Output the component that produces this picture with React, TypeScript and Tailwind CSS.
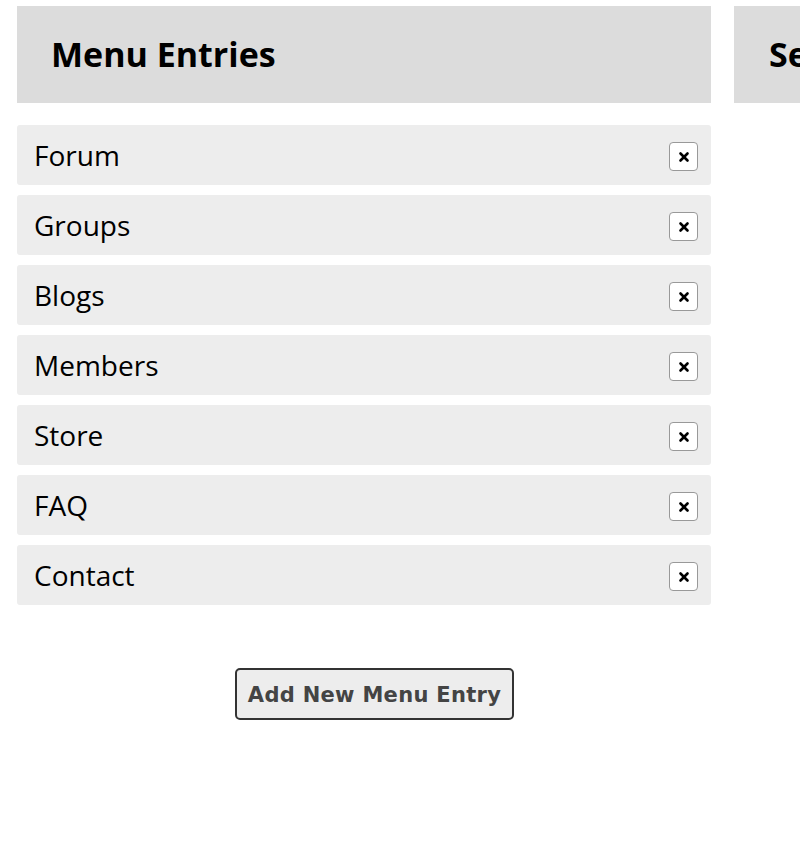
import { X } from "lucide-react";

const entries = ["Forum", "Groups", "Blogs", "Members", "Store", "FAQ", "Contact"];

function EntryRow({ label }: { label: string }) {
    return (
        <div className="flex items-center justify-between h-[60px] rounded-[3px] bg-[#ededed] pl-[17px] pr-[13px]">
            <span className="text-[28px] text-black leading-none">{label}</span>
            <button className="w-[29px] h-[29px] mt-[3px] flex items-center justify-center rounded-[4px] border border-[#999] bg-white">
                <X className="w-[14px] h-[14px] text-black" strokeWidth={4.5} />
            </button>
        </div>
    );
}

export default function App() {
    return (
        <div className="w-[800px] h-[845px] overflow-hidden bg-white pt-[6px] pl-[17px]" style={{ fontFamily: '"Open Sans", sans-serif' }}>
            <div className="flex gap-[23px] w-[1500px]">
                <div className="w-[694px] shrink-0">
                    <div className="h-[97px] bg-[#dcdcdc] flex items-center pl-[34px]">
                        <h2 className="text-[34px] font-bold text-black">Menu Entries</h2>
                    </div>
                    <div className="mt-[22px] flex flex-col gap-[10px]">
                        {entries.map((e) => (
                            <EntryRow key={e} label={e} />
                        ))}
                    </div>
                    <div className="mt-[63px] w-[715px] flex justify-center">
                        <button
                            className="h-[52px] w-[279px] pt-[3px] rounded-[5px] border-2 border-[#333] bg-[#ededed] text-[21px] font-bold text-[#444] tracking-[0.3px]"
                            style={{ fontFamily: '"DejaVu Sans", sans-serif' }}
                        >
                            Add New Menu Entry
                        </button>
                    </div>
                </div>
                <div className="w-[694px] shrink-0">
                    <div className="h-[97px] bg-[#dcdcdc] flex items-center pl-[35px]">
                        <h2 className="text-[34px] font-bold text-black">Settings</h2>
                    </div>
                </div>
            </div>
        </div>
    );
}
